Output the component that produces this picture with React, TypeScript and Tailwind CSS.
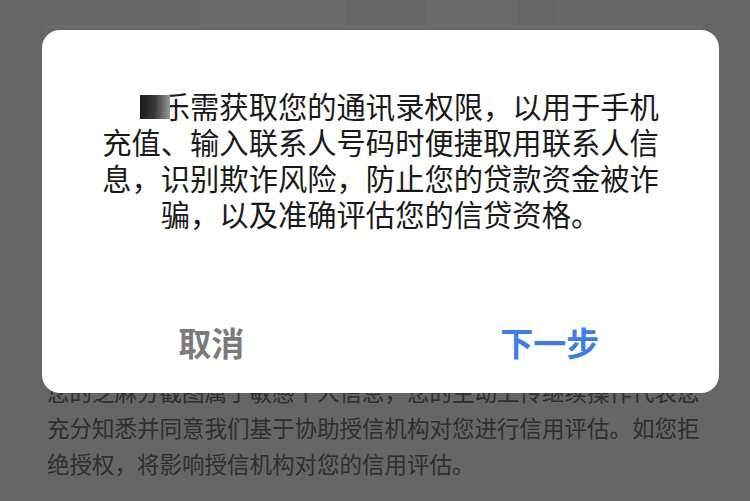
import React from "react";

const cjk = { fontFamily: '"Noto Sans CJK SC", "Noto Sans", sans-serif' };

export default function App() {
  return (
    <div className="relative w-[750px] h-[501px] overflow-hidden bg-[#666666]" style={cjk}>
      {/* blurred page content behind the overlay */}
      <div className="flex h-[25px]">
        <div className="ml-[200px] h-[25px] w-[145px] bg-[#6a6a6a]" />
        <div className="ml-[80px] h-[25px] w-[92px] bg-[#6a6a6a]" />
        <div className="ml-[38px] h-[25px] w-[5px] bg-[#696969]" />
      </div>
      <div className="mx-[46px] h-[3px] bg-[#6c6c6c]" />
      <div className="pt-[345px] pl-[47px] text-[22.5px] leading-[36px] text-[#2e2e2e]">
        <div className="whitespace-nowrap">您的芝麻分截图属于敏感个人信息，您的主动上传继续操作代表您</div>
        <div className="whitespace-nowrap">充分知悉并同意我们基于协助授信机构对您进行信用评估。如您拒</div>
        <div className="whitespace-nowrap">绝授权，将影响授信机构对您的信用评估。</div>
      </div>

      {/* dialog */}
      <div className="absolute left-[42px] top-[30px] w-[677px] h-[363px] rounded-[18px] bg-white flex flex-col">
        <div className="flex-1 pt-[57px] text-[29.3px] leading-[36px] text-[#1a1a1a] text-center">
          <div className="relative whitespace-nowrap">
            <span className="inline-block w-[2em]" />
            乐需获取您的通讯录权限，以用于手机
            <span className="absolute left-[98px] top-[8px] h-[24px] w-[30px] bg-gradient-to-r from-[#1a1a1a] via-[#3a3a3a] to-[#9a9a9a]" />
          </div>
          <div className="whitespace-nowrap">充值、输入联系人号码时便捷取用联系人信</div>
          <div className="whitespace-nowrap">息，识别欺诈风险，防止您的贷款资金被诈</div>
          <div className="whitespace-nowrap">骗，以及准确评估您的信贷资格。</div>
        </div>
        <div className="grid grid-cols-2 h-[100px]">
          <div className="flex items-center justify-center text-[33px] font-bold text-[#7b7b7b]">取消</div>
          <div className="flex items-center justify-center text-[33px] font-bold text-[#3d7de4]">下一步</div>
        </div>
      </div>
    </div>
  );
}
